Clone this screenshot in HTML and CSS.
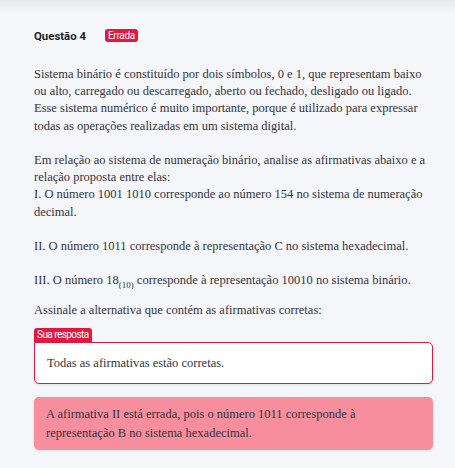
FILE: index.html
```html
<!DOCTYPE html>
<html lang="pt">
<head>
<meta charset="utf-8">
<link rel="stylesheet" href="styles.css">
</head>
<body>
<div class="page">
  <div class="question">
    <div class="head">
      <span class="title">Questão 4</span>
      <span class="badge">Errada</span>
    </div>
    <div class="statement">
      <p>Sistema binário é constituído por dois símbolos, 0 e 1, que representam baixo ou alto, carregado ou descarregado, aberto ou fechado, desligado ou ligado. Esse sistema numérico é muito importante, porque é utilizado para expressar todas as operações realizadas em um sistema digital.</p>
      <p><br></p>
      <p>Em relação ao sistema de numeração binário, analise as afirmativas abaixo e a relação proposta entre elas:</p>
      <p>I. O número 1001 1010 corresponde ao número 154 no sistema de numeração decimal.</p>
      <p><br></p>
      <p>II. O número 1011 corresponde à representação C no sistema hexadecimal.</p>
      <p><br></p>
      <p>III. O número 18<sub>(10)</sub> corresponde à representação 10010 no sistema binário.</p>
    </div>
    <p class="prompt">Assinale a alternativa que contém as afirmativas corretas:</p>
    <div class="answer">
      <span class="answer-label">Sua resposta</span>
      <div class="answer-box">Todas as afirmativas estão corretas.</div>
    </div>
    <div class="feedback">A afirmativa II está errada, pois o número 1011 corresponde à representação B no sistema hexadecimal.</div>
  </div>
</div>
</body>
</html>
```

FILE: styles.css
```css
html, body {
  margin: 0;
  padding: 0;
}
body {
  background: #f5f6fa;
  width: 455px;
  height: 468px;
  overflow: hidden;
}
.page {
  background: linear-gradient(to bottom, #e9eaee 0px, #f5f6fa 14px);
  min-height: 468px;
  padding: 28px 22px 0 34px;
  box-sizing: border-box;
}
.head {
  display: flex;
  align-items: center;
  gap: 19px;
  height: 15px;
}
.title {
  font-family: Roboto, "Noto Sans", sans-serif;
  font-weight: 700;
  font-size: 11.4px;
  color: #1d1f2a;
}
.badge {
  font-family: Roboto, "Noto Sans", sans-serif;
  font-size: 10px;
  color: #fff;
  background: #e5173f;
  border-radius: 3px;
  padding: 0 3px;
  height: 13px;
  line-height: 13px;
  letter-spacing: -0.3px;
}
.statement {
  margin-top: 23px;
  font-family: "Liberation Serif", serif;
  font-size: 12.5px;
  line-height: 17.2px;
  color: #33343f;
}
.statement p {
  margin: 0;
}
sub {
  font-size: 9px;
  line-height: 0;
}
.prompt {
  margin: 12px 0 0;
  font-family: "Liberation Serif", serif;
  font-size: 12.5px;
  line-height: 17.2px;
  color: #33343f;
}
.answer {
  margin-top: 9px;
  display: flex;
  flex-direction: column;
  align-items: flex-start;
}
.answer-label {
  font-family: Roboto, "Noto Sans", sans-serif;
  font-size: 10px;
  color: #fff;
  background: #e5173f;
  border-radius: 3px 3px 0 0;
  padding: 0 3px;
  height: 14px;
  line-height: 14px;
  letter-spacing: -0.55px;
}
.answer-box {
  align-self: stretch;
  background: #fff;
  border: 1.5px solid #e5173f;
  border-radius: 0 5px 5px 5px;
  padding: 11px 12px;
  font-family: "Liberation Serif", serif;
  font-size: 12.5px;
  line-height: 18px;
  color: #33343f;
  box-shadow: 0 1px 3px rgba(0,0,0,0.08);
}
.feedback {
  margin-top: 13px;
  background: #f78e9e;
  border-radius: 5px;
  padding: 8px 12px 7px;
  font-family: "Liberation Serif", serif;
  font-size: 12.5px;
  line-height: 19px;
  color: #33343f;
  box-shadow: 0 1px 3px rgba(0,0,0,0.08);
}
```
